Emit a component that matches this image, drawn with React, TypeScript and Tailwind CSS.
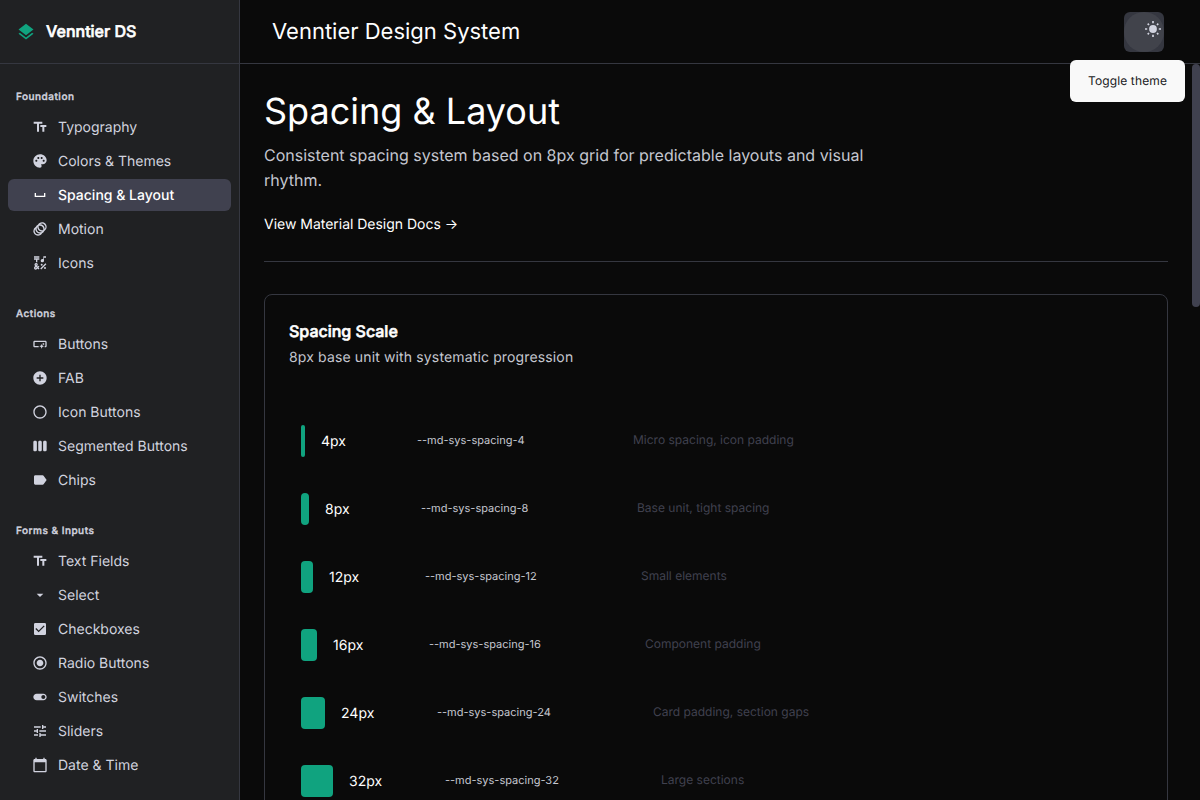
import type { IconType } from "react-icons";
import {
  MdAddCircle,
  MdAnimation,
  MdArrowDropDown,
  MdCalendarToday,
  MdCheckBox,
  MdEmojiSymbols,
  MdLabel,
  MdLayers,
  MdPalette,
  MdRadioButtonChecked,
  MdRadioButtonUnchecked,
  MdSmartButton,
  MdSpaceBar,
  MdTextFields,
  MdToggleOn,
  MdTune,
  MdViewWeek,
} from "react-icons/md";

type Item = { label: string; icon: IconType; active?: boolean };

const sections: { title: string; items: Item[] }[] = [
  {
    title: "Foundation",
    items: [
      { label: "Typography", icon: MdTextFields },
      { label: "Colors & Themes", icon: MdPalette },
      { label: "Spacing & Layout", icon: MdSpaceBar, active: true },
      { label: "Motion", icon: MdAnimation },
      { label: "Icons", icon: MdEmojiSymbols },
    ],
  },
  {
    title: "Actions",
    items: [
      { label: "Buttons", icon: MdSmartButton },
      { label: "FAB", icon: MdAddCircle },
      { label: "Icon Buttons", icon: MdRadioButtonUnchecked },
      { label: "Segmented Buttons", icon: MdViewWeek },
      { label: "Chips", icon: MdLabel },
    ],
  },
  {
    title: "Forms & Inputs",
    items: [
      { label: "Text Fields", icon: MdTextFields },
      { label: "Select", icon: MdArrowDropDown },
      { label: "Checkboxes", icon: MdCheckBox },
      { label: "Radio Buttons", icon: MdRadioButtonChecked },
      { label: "Switches", icon: MdToggleOn },
      { label: "Sliders", icon: MdTune },
      { label: "Date & Time", icon: MdCalendarToday },
    ],
  },
];

const scale = [
  { px: 4, use: "Micro spacing, icon padding" },
  { px: 8, use: "Base unit, tight spacing" },
  { px: 12, use: "Small elements" },
  { px: 16, use: "Component padding" },
  { px: 24, use: "Card padding, section gaps" },
  { px: 32, use: "Large sections" },
];

function SunIcon() {
  return (
    <svg viewBox="0 0 18 18" className="size-[18px] shrink-0 text-[#d1d3df]">
      <circle cx="9" cy="9" r="3.9" fill="currentColor" />
      <path
        d="M9 1v2.2M9 14.8V17M1 9h2.2M14.8 9H17M3.7 3.7l1.3 1.3M13 13l1.3 1.3M3.7 14.3L5 13M13 5l1.3-1.3"
        fill="none"
        stroke="currentColor"
        strokeWidth="1.7"
      />
    </svg>
  );
}

function Sidebar() {
  return (
    <aside className="flex w-60 shrink-0 flex-col overflow-hidden border-r border-[#353740] bg-[#202123]">
      <div className="flex h-16 shrink-0 items-center gap-2.5 border-b border-[#353740] px-4">
        <MdLayers className="size-5 text-[#10a37f]" />
        <span className="pb-0.5 text-base font-medium text-white [-webkit-text-stroke:0.6px_currentColor]">
          Venntier DS
        </span>
      </div>
      <nav className="flex flex-col px-2 pt-[25px]">
        {sections.map((section) => (
          <section key={section.title} className="mb-[26px]">
            <h2 className="px-2 pb-1.5 text-[10px] leading-4 font-medium tracking-[0.5px] text-[#d1d3df] [-webkit-text-stroke:0.4px_currentColor]">
              {section.title}
            </h2>
            <ul className="mb-px flex flex-col gap-0.5">
              {section.items.map(({ label, icon: Icon, active }) => (
                <li
                  key={label}
                  className={
                    active
                      ? "flex h-8 items-center gap-2.5 rounded-md bg-[#40414f] pl-6 text-sm font-medium text-white"
                      : "flex h-8 items-center gap-2.5 rounded-md pl-6 text-sm text-[#d1d3df]"
                  }
                >
                  <Icon className="size-4" />
                  <span className="pt-0.5">{label}</span>
                </li>
              ))}
            </ul>
          </section>
        ))}
      </nav>
    </aside>
  );
}

function Header() {
  return (
    <header className="flex h-16 shrink-0 items-center justify-between border-b border-[#353740] pr-9 pl-8">
      <h1 className="text-[22px] leading-7 text-white">Venntier Design System</h1>
      <div className="relative">
        <button className="flex size-10 overflow-hidden rounded-md bg-[#353740]">
          <span className="flex size-10 rounded-full bg-[#41434b] pt-2 pl-5">
            <SunIcon />
          </span>
        </button>
        <div className="absolute top-12 -right-[21px] z-10 rounded-md bg-[#f9f9f9] px-[18px] py-[13px] text-xs leading-4 tracking-[0.12px] whitespace-nowrap text-[#202123]">
          Toggle theme
        </div>
      </div>
    </header>
  );
}

function SpacingCard() {
  return (
    <section className="mt-8 rounded-lg border border-[#353740] px-6 pt-6">
      <h3 className="text-base leading-6 font-medium text-white [-webkit-text-stroke:0.6px_currentColor]">
        Spacing Scale
      </h3>
      <p className="mt-[5px] text-sm leading-5 tracking-[0.14px] text-[#c5c7d0]">
        8px base unit with systematic progression
      </p>
      <ul className="flex flex-col gap-1 px-3 pt-[41px]">
        {scale.map(({ px, use }) => (
          <li key={px} className="flex h-16 items-center gap-4">
            <span className="h-8 shrink-0 rounded bg-[#10a37f]" style={{ width: px }} />
            <span className="w-20 pt-0.5 text-sm text-white">{px}px</span>
            <span className="w-50 pb-0.5 text-[11px] leading-4 text-[#c5c7d0]">
              --md-sys-spacing-{px}
            </span>
            <span className="pb-0.5 text-xs leading-4 text-[#40414f]">{use}</span>
          </li>
        ))}
      </ul>
    </section>
  );
}

export default function App() {
  return (
    <div className="flex h-screen overflow-hidden bg-[#0a0a0a] font-[Inter,sans-serif] [text-rendering:geometricPrecision]">
      <Sidebar />
      <div className="flex min-w-0 flex-1 flex-col">
        <Header />
        <div className="flex min-h-0 flex-1">
          <main className="min-w-0 flex-1 overflow-hidden pt-6 pr-6 pl-6">
            <h2 className="text-4xl leading-[46px] text-white">Spacing &amp; Layout</h2>
            <p className="mt-[9px] max-w-[600px] text-base leading-[25px] text-[#c5c7d0]">
              Consistent spacing system based on 8px grid for predictable layouts and visual rhythm.
            </p>
            <a className="mt-[22px] block text-sm leading-5 tracking-[-0.02px] text-white">
              View Material Design Docs →
            </a>
            <hr className="mt-[26px] border-[#353740]" />
            <SpacingCard />
          </main>
          <div className="w-2 shrink-0">
            <div className="h-[243px] rounded-full bg-[#40414f]" />
          </div>
        </div>
      </div>
    </div>
  );
}
